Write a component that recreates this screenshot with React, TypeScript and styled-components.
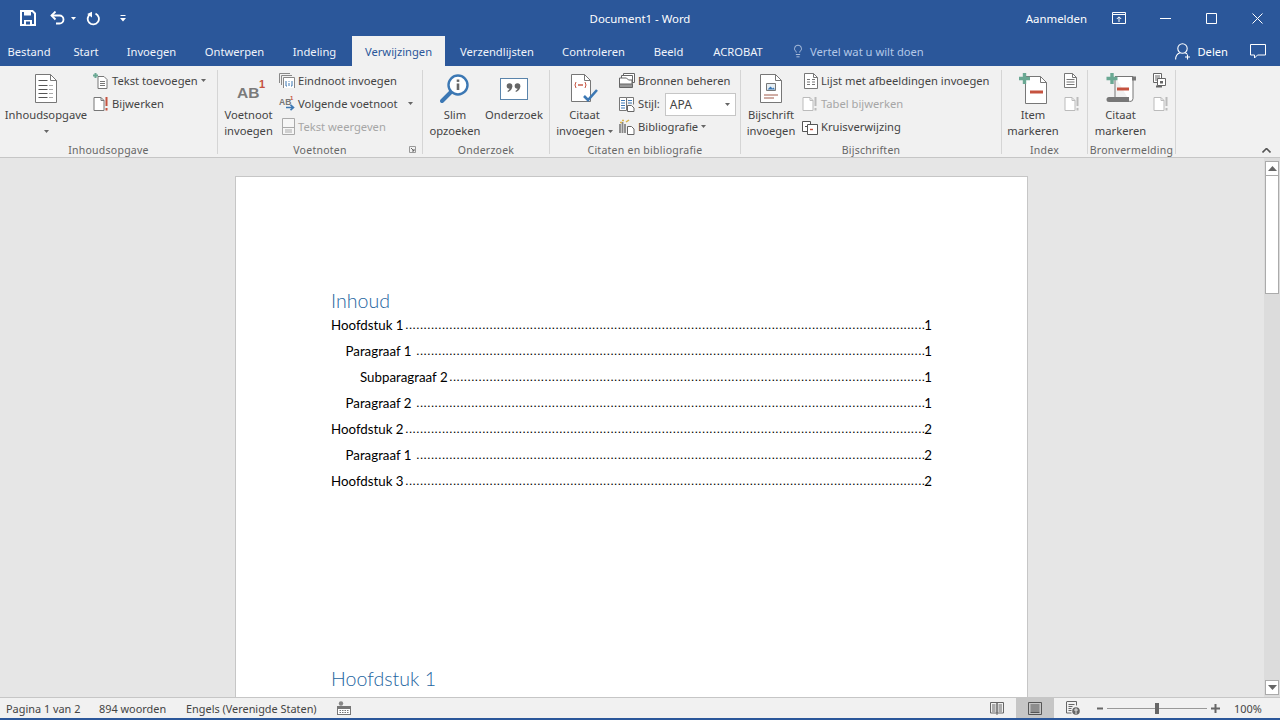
import { ReactNode } from 'react';
import styled, { createGlobalStyle } from 'styled-components';
import { Lightbulb } from 'lucide-react';

const UI_FONT = '"Noto Sans", "Open Sans", sans-serif';
const DOC_FONT = 'Lato, "Open Sans", sans-serif';
const BLUE = '#2b579a';

const GlobalStyle = createGlobalStyle`
  html, body { margin: 0; padding: 0; height: 100%; overflow: hidden; }
  body { font-family: ${UI_FONT}; }
  #root { height: 100%; }
`;

/* ---- small drawn icons ---- */

const Ico = ({ w = 16, h = 16, children }: { w?: number; h?: number; children: ReactNode }) => (
  <svg width={w} height={h} viewBox={`0 0 ${w} ${h}`} fill="none" style={{ display: 'block', flex: 'none' }}>
    {children}
  </svg>
);

const Caret = ({ color = '#666' }: { color?: string }) => (
  <svg width="5" height="3" viewBox="0 0 5 3" style={{ display: 'block', flex: 'none' }}>
    <path d="M0 0h5L2.5 3z" fill={color} />
  </svg>
);

const SaveIcon = () => (
  <Ico w={16} h={16}>
    <path d="M1 1h11.5L15 3.5V15H1z" stroke="#fff" strokeWidth="2" />
    <path d="M4 1.5h7v4H4z" fill="#fff" />
    <path d="M4 10h8v5H4z" fill="#fff" />
    <path d="M6 11.5h4v3H6z" fill={BLUE} />
  </Ico>
);
const UndoIcon = () => (
  <Ico w={15} h={14}>
    <path d="M1.5 4.5h8a4 4 0 0 1 0 8H6" stroke="#fff" strokeWidth="1.8" />
    <path d="M5.5 0.5 1.5 4.5l4 4" stroke="#fff" strokeWidth="1.8" />
  </Ico>
);
const RedoIcon = () => (
  <Ico w={14} h={15}>
    <path d="M4.5 3a5.6 5.6 0 1 0 5-.3" stroke="#fff" strokeWidth="1.8" />
    <path d="M6 0.8V6.4L1.2 3z" fill="#fff" />
  </Ico>
);
const CustomizeIcon = () => (
  <Ico w={6} h={7}>
    <path d="M0.5 0.5h5" stroke="#fff" />
    <path d="M0 3h6L3 6.5z" fill="#fff" />
  </Ico>
);
const RibbonDisplayIcon = () => (
  <Ico w={14} h={12}>
    <path d="M.5 2.5h13v9H.5z" stroke="#fff" />
    <path d="M.5.5h13v2H.5z" stroke="#fff" />
    <path d="M7 10V5M4.8 7 7 4.8 9.2 7" stroke="#fff" />
  </Ico>
);
const MinimizeIcon = () => (
  <Ico w={11} h={1}><path d="M0 .5h11" stroke="#fff" /></Ico>
);
const MaximizeIcon = () => (
  <Ico w={11} h={11}><path d="M.5.5h10v10H.5z" stroke="#fff" /></Ico>
);
const CloseIcon = () => (
  <Ico w={11} h={11}><path d="M.5.5l10 10M10.5.5l-10 10" stroke="#fff" /></Ico>
);
const ShareIcon = () => (
  <Ico w={16} h={17}>
    <circle cx="7.5" cy="5.5" r="4.7" stroke="#fff" strokeWidth="1.1" />
    <path d="M.6 16.5c0-3.5 2-6 4.4-6.8M10 9.7c.8.3 1.4.7 2 1.3" stroke="#fff" strokeWidth="1.1" />
    <path d="M12.5 11.5v5M10 14h5" stroke="#fff" strokeWidth="1.1" />
  </Ico>
);
const CommentIcon = () => (
  <Ico w={16} h={15}>
    <path d="M.5.5h15v10.5H7.5L4.5 14v-3H.5z" stroke="#fff" />
  </Ico>
);

const Sheet = ({ x = 0.5, y = 0.5, w = 21, h = 28, fold = 6, stroke = '#777' }: {
  x?: number; y?: number; w?: number; h?: number; fold?: number; stroke?: string;
}) => (
  <>
    <path
      d={`M${x} ${y}h${w - fold}l${fold} ${fold}v${h - fold}h-${w}z`}
      fill="#fff"
      stroke={stroke}
    />
    <path d={`M${x + w - fold} ${y}v${fold}h${fold}`} stroke={stroke} />
  </>
);

const TocLargeIcon = () => (
  <Ico w={22} h={29}>
    <Sheet />
    <path d="M3.5 6.5h9M3.5 11.5h9M3.5 15.5h9M3.5 19.5h9M3.5 23.5h9" stroke="#555" />
    <path d="M14.5 11.5h4M14.5 15.5h4M14.5 19.5h4M14.5 23.5h4" stroke="#555" strokeDasharray="1 1" />
  </Ico>
);
const AddTextIcon = () => (
  <Ico>
    <path d="M5 3.5h6l3 3v9H5z" fill="#fff" stroke="#777" />
    <path d="M7 8.5h5M7 10.5h5M7 12.5h5" stroke="#777" />
    <path d="M2.5 0v5M0 2.5h5" stroke="#6aa893" strokeWidth="2" />
  </Ico>
);
const UpdateIcon = ({ muted }: { muted?: boolean }) => (
  <Ico>
    <path d="M1 1.5h7l3 3v10H1z" fill="#fff" stroke={muted ? '#bbb' : '#777'} />
    <path d="M8 1.5v3h3" stroke={muted ? '#bbb' : '#777'} />
    <path d="M13.5 1v9M13.5 12v2.5" stroke={muted ? '#bbb' : '#c5523f'} strokeWidth="2" />
  </Ico>
);
const FootnoteLargeIcon = () => (
  <svg width="30" height="28" viewBox="0 0 30 28" style={{ display: 'block', marginLeft: '6px' }}>
    <text x="0" y="23" fontFamily="Liberation Sans" fontWeight="700" fontSize="15.5" fill="#7a7a7a">AB</text>
    <text x="22" y="12.5" fontFamily="Liberation Sans" fontWeight="700" fontSize="11" fill="#c5523f">1</text>
  </svg>
);
const EndnoteIcon = () => (
  <Ico>
    <path d="M.5 10V.5H11M2.5 12V2.5H13" stroke="#888" />
    <path d="M4.5 15V4.5h11V15" fill="#fff" stroke="#888" />
    <path d="M7 8v5h1M13 8v5h-1" stroke="#3c78b4" />
    <path d="M10 8v.8M10 10v3" stroke="#3c78b4" />
  </Ico>
);
const NextNoteIcon = () => (
  <svg width="16" height="17" viewBox="0 0 16 17" style={{ display: 'block', flex: 'none', overflow: 'visible' }}>
    <text x="0" y="10" fontFamily="Liberation Sans" fontWeight="700" fontSize="8.5" fill="#777">AB</text>
    <text x="11" y="5" fontFamily="Liberation Sans" fontWeight="700" fontSize="6" fill="#c5523f">1</text>
    <path d="M7 12.5h7M11.5 9.8l3 2.7-3 2.7" stroke="#3c78b4" strokeWidth="1.6" fill="none" />
  </svg>
);
const ShowNotesIcon = () => (
  <Ico w={16} h={17}>
    <path d="M3.5.5h12v16h-12z" fill="#f6f6f6" stroke="#aaa" />
    <path d="M3.5 9.5h12M6 12h7M6 14h7" stroke="#aaa" />
  </Ico>
);
const SmartLookupIcon = () => (
  <Ico w={30} h={30}>
    <path d="M11 18 2 27" stroke="#3c78b4" strokeWidth="4" strokeLinecap="round" />
    <circle cx="18" cy="11" r="9.5" fill="#fff" stroke="#3c78b4" strokeWidth="2.4" />
    <path d="M18 9.5V16" stroke="#666" strokeWidth="2.6" />
    <path d="M18 5.5v2.4" stroke="#666" strokeWidth="2.6" />
  </Ico>
);
const ResearchIcon = () => (
  <Ico w={28} h={22}>
    <rect x=".5" y=".5" width="27" height="21" fill="#fff" stroke="#5a84ab" />
    <circle cx="9.5" cy="8" r="2.8" fill="#666" />
    <path d="M12.3 8c0 3-1.6 5-4.3 6l-.6-1c1.6-.8 2.4-2 2.4-3.5z" fill="#666" />
    <circle cx="17.5" cy="8" r="2.8" fill="#666" />
    <path d="M20.3 8c0 3-1.6 5-4.3 6l-.6-1c1.6-.8 2.4-2 2.4-3.5z" fill="#666" />
  </Ico>
);
const CitationIcon = () => (
  <Ico w={28} h={30}>
    <Sheet w={19} h={27} />
    <path d="M5 8q-2 3 0 6M14 8q2 3 0 6" stroke="#c5523f" />
    <path d="M7 11h5" stroke="#c5523f" strokeWidth="1.4" />
    <path d="M13 22l4 4 9-10" stroke="#3c78b4" strokeWidth="2.6" />
  </Ico>
);
const SourcesIcon = () => (
  <Ico w={16} h={16}>
    <path d="M4.5 5V.5h11v9h-2" fill="#fff" stroke="#666" />
    <path d="M2.5 7V2.5h11v8" fill="#fff" stroke="#666" />
    <path d="M.5 11V5h7l2 2h3.5v4" fill="#fff" stroke="#666" />
    <path d="M.5 11h13v3.5H.5z" fill="#999" stroke="#666" />
  </Ico>
);
const StyleIcon = () => (
  <Ico>
    <path d="M.5 1.5h7v13h-7zM7.5 1.5h7v7" fill="#fff" stroke="#777" />
    <path d="M2 4.5h4M2 7h4M2 9.5h4M2 12h4M9 4.5h4M9 7h4" stroke="#3c78b4" />
    <path d="M8.5 9.5h4l2.5 2.5v3.5H8.5z" fill="#fff" stroke="#666" />
  </Ico>
);
const BibliographyIcon = () => (
  <Ico>
    <path d="M1 5v9M3.5 3v11M6 5v9" stroke="#888" strokeWidth="1.8" />
    <path d="M1 3.5h2M3 1.5h2" stroke="#d9b44a" strokeWidth="1.5" />
    <path d="M7 3l3-2" stroke="#d9b44a" strokeWidth="1.5" />
    <path d="M8.5 7.5h4l2.5 2.5v5.5H8.5z" fill="#fff" stroke="#666" />
  </Ico>
);
const CaptionLargeIcon = () => (
  <Ico w={22} h={29}>
    <Sheet />
    <path d="M6.5 9.5h9v7h-9z" fill="#e4edf3" stroke="#777" />
    <path d="M7.5 15.5l3-3 2 2 1-1 1.5 2z" fill="#3c78b4" />
    <path d="M4 21h14M4 24h10" stroke="#a05a4a" />
  </Ico>
);
const FigureListIcon = () => (
  <Ico w={16} h={16}>
    <Sheet x={2.5} w={13} h={15} fold={4} />
    <path d="M5 6.5h3M10 6.5h3M5 9h3M10 9h3M5 11.5h3M10 11.5h3" stroke="#777" />
  </Ico>
);
const CrossRefIcon = () => (
  <Ico>
    <path d="M.5 2.5h8v10h-8z" fill="#fff" stroke="#555" />
    <path d="M5.5 5.5h10v10h-10z" fill="#fff" stroke="#555" />
    <path d="M3 7.5h3" stroke="#555" />
    <path d="M8 10.5h3" stroke="#c5523f" strokeWidth="1.4" />
  </Ico>
);
const MarkEntryIcon = () => (
  <Ico w={28} h={31}>
    <path d="M6.5 3.5h15l6 6v21h-21z" fill="#fff" stroke="#777" />
    <path d="M21.5 3.5v6h6" stroke="#777" />
    <path d="M5.5 0v11M0 5.5h11" stroke="#6aa893" strokeWidth="3.4" />
    <path d="M11 19h13" stroke="#c5523f" strokeWidth="3" />
  </Ico>
);
const MarkCitationIcon = () => (
  <Ico w={30} h={31}>
    <path d="M9 3.5h18v22a3 3 0 0 1-3 3" fill="#fff" stroke="#777" />
    <path d="M26 3.5h4v4h-4z" fill="#777" />
    <path d="M3 24h20v3a2 2 0 0 0 2 2H3a2.5 2.5 0 0 1 0-5z" fill="#777" />
    <path d="M9 4v20" stroke="#777" />
    <path d="M6 0v11M0.5 5.5h11" stroke="#6aa893" strokeWidth="3.4" />
    <path d="M11 16h12" stroke="#c5523f" strokeWidth="3" />
  </Ico>
);
const TableEntriesIcon = () => (
  <Ico w={13} h={15}>
    <path d="M.5.5h8v9h-8z" fill="#fff" stroke="#666" />
    <path d="M2 3h5M2 5h5M2 7h5" stroke="#666" />
    <path d="M4.5 5.5h8v7h-8z" fill="#fff" stroke="#666" />
    <path d="M7 8h3v2.5H7z" fill="#666" />
    <path d="M3 12.5h6v2H3z" fill="#666" />
  </Ico>
);
const PageDocIcon = () => (
  <Ico w={13} h={15}>
    <Sheet w={12} h={14} fold={4} />
    <path d="M2.5 6.5h8M2.5 9h8M2.5 11.5h8" stroke="#777" />
  </Ico>
);
const ProofIcon = () => (
  <Ico w={14} h={14}>
    <circle cx="4" cy="2.5" r="2.2" fill="#888" />
    <rect x=".5" y="5.5" width="13" height="8" fill="#fff" stroke="#777" />
    <path d="M.5 7h13" stroke="#777" strokeWidth="2" />
    <path d="M2.5 9.5h9M2.5 11.5h9" stroke="#777" strokeDasharray="1.5 1" />
  </Ico>
);
const ReadIcon = () => (
  <Ico w={14} h={14}>
    <path d="M.5 1.5h6.5v10.5H.5zM7 1.5h6.5v10.5H7z" stroke="#666" />
    <path d="M2 4h3.5M2 6h3.5M2 8h3.5M2 10h3.5M8.5 4H12M8.5 6H12M8.5 8H12M8.5 10H12M7 12v2" stroke="#666" />
  </Ico>
);
const PrintIcon = () => (
  <Ico w={14} h={13}>
    <path d="M.5.5h13v12H.5z" stroke="#555" />
    <path d="M2.5 3h9M2.5 5h9M2.5 7h9M2.5 9h9M2.5 10.5h9" stroke="#555" />
  </Ico>
);
const WebIcon = () => (
  <Ico w={14} h={14}>
    <path d="M.5.5h10v4M.5 1v11h5" stroke="#666" />
    <path d="M2.5 3.5h6M2.5 5.5h4M2.5 7.5h3M2.5 9.5h3" stroke="#666" />
    <circle cx="10" cy="10" r="3.8" fill="#666" />
    <path d="M8 9h4M10 7v6" stroke="#fff" strokeWidth=".8" />
  </Ico>
);
const ZoomOutIcon = () => (
  <Ico w={6} h={9}><path d="M0 4.5h6" stroke="#666" strokeWidth="2" /></Ico>
);
const ZoomInIcon = () => (
  <Ico w={9} h={9}><path d="M0 4.5h9M4.5 0v9" stroke="#666" strokeWidth="2" /></Ico>
);

/* ---- title bar ---- */

const Window = styled.div`
  display: flex;
  flex-direction: column;
  width: 1280px;
  height: 720px;
  overflow: hidden;
  background: #e6e6e6;
`;

const TitleBar = styled.div`
  display: grid;
  grid-template-columns: 1fr auto 1fr;
  align-items: center;
  height: 36px;
  background: ${BLUE};
  color: #fff;
  font-size: 11.4px;
`;

const QuickAccess = styled.div`
  display: flex;
  align-items: center;
  padding-left: 20px;
`;

const QuickGap = styled.div<{ $size: number }>`
  width: ${(p) => p.$size}px;
  flex: none;
`;

const WindowControls = styled.div`
  display: flex;
  align-items: center;
  justify-content: flex-end;
`;

const SignIn = styled.span`
  margin-right: 9px;
`;

const WindowButton = styled.div`
  display: flex;
  justify-content: center;
  align-items: center;
  width: 46px;
`;

/* ---- tabs ---- */

const TabBar = styled.div`
  display: flex;
  align-items: stretch;
  height: 30px;
  background: ${BLUE};
`;

const Tab = styled.div<{ $active?: boolean; $width: number }>`
  display: flex;
  align-items: center;
  justify-content: center;
  width: ${(p) => p.$width}px;
  margin-right: 3px;
  font-size: 11.2px;
  color: ${(p) => (p.$active ? BLUE : '#f0f4fb')};
  background: ${(p) => (p.$active ? '#f1f1f1' : 'transparent')};
`;

const TellMe = styled.div`
  display: flex;
  align-items: center;
  gap: 5px;
  margin-left: 11px;
  font-size: 11.2px;
  color: #b3c8e8;
`;

const TabRight = styled.div`
  display: flex;
  align-items: center;
  margin-left: auto;
  padding-right: 14px;
  color: #fff;
  font-size: 11.2px;
`;

/* ---- ribbon ---- */

const Ribbon = styled.div`
  position: relative;
  display: flex;
  height: 92px;
  box-sizing: border-box;
  background: #f1f1f1;
  border-bottom: 1px solid #c6c6c6;
  color: #444;
  font-size: 11.2px;
`;

const Group = styled.div<{ $width: number }>`
  position: relative;
  display: flex;
  flex-direction: column;
  width: ${(p) => p.$width}px;
  height: 84px;
  margin-top: 4px;
  box-sizing: border-box;
  border-right: 1px solid #d5d5d5;
`;

const GroupBody = styled.div`
  display: flex;
  flex: none;
  height: 74px;
`;

const GroupLabel = styled.div`
  flex: none;
  text-align: center;
  font-size: 10.5px;
  line-height: 12px;
  letter-spacing: 0.25px;
  color: #666;
`;

const LargeButton = styled.div<{ $width: number }>`
  display: flex;
  flex-direction: column;
  align-items: center;
  flex: none;
  width: ${(p) => p.$width}px;
`;

const LargeIconBox = styled.div`
  display: flex;
  justify-content: center;
  align-items: center;
  height: 37px;
`;

const LargeLabel = styled.div`
  display: flex;
  flex-direction: column;
  align-items: center;
  line-height: 16px;
  white-space: nowrap;
`;

const LabelLine = styled.div`
  display: flex;
  align-items: center;
  gap: 3px;
  height: 16px;
`;

const SmallColumn = styled.div<{ $left: number }>`
  display: flex;
  flex-direction: column;
  margin-left: ${(p) => p.$left}px;
`;

const SmallButton = styled.div<{ $disabled?: boolean }>`
  display: flex;
  align-items: center;
  gap: 3px;
  height: 23px;
  padding-bottom: 2px;
  box-sizing: border-box;
  white-space: nowrap;
  color: ${(p) => (p.$disabled ? '#a6a6a6' : 'inherit')};
`;

const StyleSelect = styled.div`
  display: flex;
  align-items: center;
  justify-content: space-between;
  width: 71px;
  height: 23px;
  margin-top: 2px;
  margin-left: 2px;
  padding: 0 5px 0 4px;
  box-sizing: border-box;
  background: #fff;
  border: 1px solid #c6c6c6;
  font-size: 12px;
`;

const Launcher = styled.div`
  position: absolute;
  right: 6px;
  bottom: 1px;
`;

const Collapse = styled.div`
  position: absolute;
  right: 9px;
  bottom: 4px;
`;

/* ---- document ---- */

const Workspace = styled.div`
  display: flex;
  flex: 1;
  min-height: 0;
`;

const DocumentArea = styled.div`
  flex: 1;
  padding: 18px 0 0 235px;
  overflow: hidden;
`;

const Page = styled.div`
  width: 793px;
  height: 640px;
  box-sizing: border-box;
  padding: 111px 95px 0;
  background: #fff;
  border: 1px solid #c6c6c6;
  font-family: ${DOC_FONT};
  color: #000;
`;

const Heading = styled.div<{ $top?: number }>`
  margin-top: ${(p) => p.$top ?? 0}px;
  font-size: 19.6px;
  line-height: 25px;
  font-weight: 300;
  color: #25659f;
`;

const TocRow = styled.div<{ $level: number }>`
  display: flex;
  height: 26px;
  align-items: flex-start;
  padding-left: ${(p) => p.$level * 14.5}px;
  font-size: 13.3px;
  line-height: 24px;
  white-space: nowrap;
`;

const Leader = styled.div`
  flex: 1;
  min-width: 0;
  margin-right: -1px;
  text-align: right;
  font-family: "Liberation Sans", sans-serif;
  font-size: 13.2px;
`;

/* ---- scrollbar ---- */

const Scrollbar = styled.div`
  display: flex;
  flex-direction: column;
  width: 16px;
  padding: 3px 1px 2px;
  box-sizing: border-box;
  background: #dcdcdc;
`;

const ScrollButton = styled.div`
  display: flex;
  align-items: center;
  justify-content: center;
  height: 15px;
  box-sizing: border-box;
  background: #fff;
  border: 1px solid #ababab;
`;

const ScrollThumb = styled.div`
  height: 118px;
  box-sizing: border-box;
  background: #fff;
  border: 1px solid #ababab;
  border-top: none;
`;

const ScrollSpace = styled.div`
  flex: 1;
`;

/* ---- status bar ---- */

const StatusBar = styled.div`
  display: flex;
  align-items: stretch;
  height: 23px;
  box-sizing: border-box;
  background: #f1f1f1;
  border-top: 1px solid #c6c6c6;
  border-bottom: 2px solid ${BLUE};
  color: #444;
  font-size: 10.9px;
`;

const StatusText = styled.div<{ $width: number; $left?: number }>`
  display: flex;
  align-items: center;
  width: ${(p) => p.$width}px;
  margin-left: ${(p) => p.$left ?? 0}px;
  white-space: nowrap;
`;

const ViewButton = styled.div<{ $active?: boolean }>`
  display: flex;
  align-items: center;
  justify-content: center;
  width: 38px;
  background: ${(p) => (p.$active ? '#c6c6c6' : 'transparent')};
`;

const Zoom = styled.div`
  display: flex;
  align-items: center;
  margin-left: 5px;
`;

const ZoomTrack = styled.div`
  position: relative;
  width: 100px;
  height: 1px;
  margin: 0 4px;
  background: #999;
`;

const ZoomThumb = styled.div`
  position: absolute;
  left: 48px;
  top: -5px;
  width: 4px;
  height: 11px;
  background: #666;
`;

const TOC = [
  { label: 'Hoofdstuk 1', level: 0, page: 1, dots: 142 },
  { label: 'Paragraaf 1', level: 1, page: 1, dots: 139 },
  { label: 'Subparagraaf 2', level: 2, page: 1, dots: 130 },
  { label: 'Paragraaf 2', level: 1, page: 1, dots: 139 },
  { label: 'Hoofdstuk 2', level: 0, page: 2, dots: 142 },
  { label: 'Paragraaf 1', level: 1, page: 2, dots: 139 },
  { label: 'Hoofdstuk 3', level: 0, page: 2, dots: 142 },
];

export default function App() {
  return (
    <Window>
      <GlobalStyle />
      <TitleBar>
        <QuickAccess>
          <SaveIcon />
          <QuickGap $size={14} />
          <UndoIcon />
          <QuickGap $size={6} />
          <Caret color="#fff" />
          <QuickGap $size={10} />
          <RedoIcon />
          <QuickGap $size={20} />
          <CustomizeIcon />
        </QuickAccess>
        <div>Document1 - Word</div>
        <WindowControls>
          <SignIn>Aanmelden</SignIn>
          <WindowButton><RibbonDisplayIcon /></WindowButton>
          <WindowButton><MinimizeIcon /></WindowButton>
          <WindowButton><MaximizeIcon /></WindowButton>
          <WindowButton><CloseIcon /></WindowButton>
        </WindowControls>
      </TitleBar>

      <TabBar>
        <Tab $width={58}>Bestand</Tab>
        <Tab $width={50}>Start</Tab>
        <Tab $width={75}>Invoegen</Tab>
        <Tab $width={85}>Ontwerpen</Tab>
        <Tab $width={69}>Indeling</Tab>
        <Tab $width={93} $active>Verwijzingen</Tab>
        <Tab $width={98}>Verzendlijsten</Tab>
        <Tab $width={89}>Controleren</Tab>
        <Tab $width={55}>Beeld</Tab>
        <Tab $width={78}>ACROBAT</Tab>
        <TellMe>
          <Lightbulb size={14} strokeWidth={1.2} color="#dfe8f6" />
          Vertel wat u wilt doen
        </TellMe>
        <TabRight>
          <ShareIcon />
          <QuickGap $size={6} />
          Delen
          <QuickGap $size={22} />
          <CommentIcon />
        </TabRight>
      </TabBar>

      <Ribbon>
        <Group $width={218}>
          <GroupBody>
            <LargeButton $width={92}>
              <LargeIconBox><TocLargeIcon /></LargeIconBox>
              <LargeLabel>
                <LabelLine>Inhoudsopgave</LabelLine>
                <LabelLine><Caret /></LabelLine>
              </LargeLabel>
            </LargeButton>
            <SmallColumn $left={1}>
              <SmallButton><AddTextIcon />Tekst toevoegen<Caret /></SmallButton>
              <SmallButton><UpdateIcon />Bijwerken</SmallButton>
            </SmallColumn>
          </GroupBody>
          <GroupLabel>Inhoudsopgave</GroupLabel>
        </Group>

        <Group $width={205}>
          <GroupBody>
            <LargeButton $width={61}>
              <LargeIconBox><FootnoteLargeIcon /></LargeIconBox>
              <LargeLabel>
                <LabelLine>Voetnoot</LabelLine>
                <LabelLine>invoegen</LabelLine>
              </LargeLabel>
            </LargeButton>
            <SmallColumn $left={0}>
              <SmallButton><EndnoteIcon />Eindnoot invoegen</SmallButton>
              <SmallButton><NextNoteIcon />Volgende voetnoot<QuickGap $size={4} /><Caret /></SmallButton>
              <SmallButton $disabled><ShowNotesIcon />Tekst weergeven</SmallButton>
            </SmallColumn>
          </GroupBody>
          <GroupLabel>Voetnoten</GroupLabel>
          <Launcher>
            <Ico w={7} h={7}>
              <path d="M.5.5h6v6h-6z" stroke="#999" />
              <path d="M2 2l3 3M5 3v2H3" stroke="#666" />
            </Ico>
          </Launcher>
        </Group>

        <Group $width={127}>
          <GroupBody>
            <LargeButton $width={64}>
              <LargeIconBox><SmartLookupIcon /></LargeIconBox>
              <LargeLabel>
                <LabelLine>Slim</LabelLine>
                <LabelLine>opzoeken</LabelLine>
              </LargeLabel>
            </LargeButton>
            <LargeButton $width={54}>
              <LargeIconBox><ResearchIcon /></LargeIconBox>
              <LargeLabel>
                <LabelLine>Onderzoek</LabelLine>
              </LargeLabel>
            </LargeButton>
          </GroupBody>
          <GroupLabel>Onderzoek</GroupLabel>
        </Group>

        <Group $width={191}>
          <GroupBody>
            <LargeButton $width={69}>
              <LargeIconBox><CitationIcon /></LargeIconBox>
              <LargeLabel>
                <LabelLine>Citaat</LabelLine>
                <LabelLine>invoegen<Caret /></LabelLine>
              </LargeLabel>
            </LargeButton>
            <SmallColumn $left={0}>
              <SmallButton><SourcesIcon />Bronnen beheren</SmallButton>
              <SmallButton><StyleIcon />Stijl:<StyleSelect>APA<Caret /></StyleSelect></SmallButton>
              <SmallButton><BibliographyIcon />Bibliografie<Caret /></SmallButton>
            </SmallColumn>
          </GroupBody>
          <GroupLabel>Citaten en bibliografie</GroupLabel>
        </Group>

        <Group $width={261}>
          <GroupBody>
            <LargeButton $width={60}>
              <LargeIconBox><CaptionLargeIcon /></LargeIconBox>
              <LargeLabel>
                <LabelLine>Bijschrift</LabelLine>
                <LabelLine>invoegen</LabelLine>
              </LargeLabel>
            </LargeButton>
            <SmallColumn $left={1}>
              <SmallButton><FigureListIcon />Lijst met afbeeldingen invoegen</SmallButton>
              <SmallButton $disabled><UpdateIcon muted />Tabel bijwerken</SmallButton>
              <SmallButton><CrossRefIcon />Kruisverwijzing</SmallButton>
            </SmallColumn>
          </GroupBody>
          <GroupLabel>Bijschriften</GroupLabel>
        </Group>

        <Group $width={86}>
          <GroupBody>
            <LargeButton $width={62}>
              <LargeIconBox><MarkEntryIcon /></LargeIconBox>
              <LargeLabel>
                <LabelLine>Item</LabelLine>
                <LabelLine>markeren</LabelLine>
              </LargeLabel>
            </LargeButton>
            <SmallColumn $left={0}>
              <SmallButton><PageDocIcon /></SmallButton>
              <SmallButton><UpdateIcon muted /></SmallButton>
            </SmallColumn>
          </GroupBody>
          <GroupLabel>Index</GroupLabel>
        </Group>

        <Group $width={88}>
          <GroupBody>
            <LargeButton $width={65}>
              <LargeIconBox><MarkCitationIcon /></LargeIconBox>
              <LargeLabel>
                <LabelLine>Citaat</LabelLine>
                <LabelLine>markeren</LabelLine>
              </LargeLabel>
            </LargeButton>
            <SmallColumn $left={0}>
              <SmallButton><TableEntriesIcon /></SmallButton>
              <SmallButton><UpdateIcon muted /></SmallButton>
            </SmallColumn>
          </GroupBody>
          <GroupLabel>Bronvermelding</GroupLabel>
        </Group>

        <Collapse>
          <Ico w={9} h={5}><path d="M.5 4.5l4-4 4 4" stroke="#555" strokeWidth="1.6" /></Ico>
        </Collapse>
      </Ribbon>

      <Workspace>
        <DocumentArea>
          <Page>
            <Heading>Inhoud</Heading>
            {TOC.map((row, i) => (
              <TocRow key={i} $level={row.level}>
                {row.label}
                <Leader>{'.'.repeat(row.dots)}</Leader>
                {row.page}
              </TocRow>
            ))}
            <Heading $top={171}>Hoofdstuk 1</Heading>
          </Page>
        </DocumentArea>
        <Scrollbar>
          <ScrollButton>
            <Ico w={9} h={5}><path d="M0 5h9L4.5 0z" fill="#666" /></Ico>
          </ScrollButton>
          <ScrollThumb />
          <ScrollSpace />
          <ScrollButton>
            <Ico w={9} h={5}><path d="M0 0h9L4.5 5z" fill="#666" /></Ico>
          </ScrollButton>
        </Scrollbar>
      </Workspace>

      <StatusBar>
        <StatusText $width={93} $left={6}>Pagina 1 van 2</StatusText>
        <StatusText $width={87}>894 woorden</StatusText>
        <StatusText $width={151}>Engels (Verenigde Staten)</StatusText>
        <StatusText $width={641}><ProofIcon /></StatusText>
        <ViewButton><ReadIcon /></ViewButton>
        <ViewButton $active><PrintIcon /></ViewButton>
        <ViewButton><WebIcon /></ViewButton>
        <Zoom>
          <ZoomOutIcon />
          <ZoomTrack><ZoomThumb /></ZoomTrack>
          <ZoomInIcon />
        </Zoom>
        <StatusText $width={30} $left={14}>100%</StatusText>
      </StatusBar>
    </Window>
  );
}
